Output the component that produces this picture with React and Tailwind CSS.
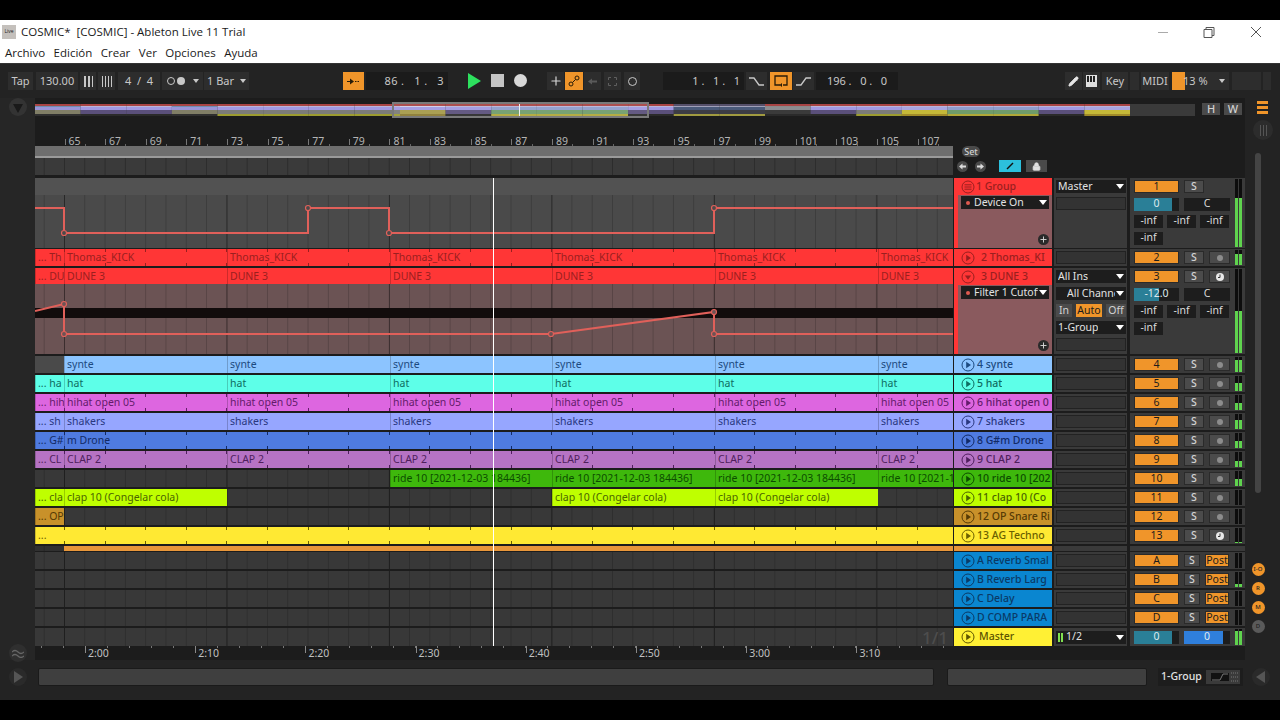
import React from "react";
import { Lock, Pencil, Plus } from "lucide-react";

const BAR = 20.31;
const barX = (b) => 29.5 + (b - 65) * BAR;
const STARTS = [64, 227, 390, 552, 715, 878];

const tracks = [
  { n: "4 synte", c: "#8cc4ff", t: "#1c4a80", label: "synte", lead: null, level: 0.8 },
  { n: "5 hat", c: "#5dffe8", t: "#0e6d62", label: "hat", lead: "... ha", level: 0.55 },
  { n: "6 hihat open 0", c: "#dd66e0", t: "#641c6b", label: "hihat open 05", lead: "... hih", ticks: true, level: 0.5 },
  { n: "7 shakers", c: "#96a6ff", t: "#29377f", label: "shakers", lead: "... sh", level: 0.6 },
  { n: "8 G#m Drone", c: "#4f7be0", t: "#122a66", lead: "... G#", ticks: true, level: 0.45 },
  { n: "9 CLAP 2", c: "#b673c4", t: "#4f1f5d", label: "CLAP 2", lead: "... CL", ticks: true, level: 0.4 },
  { n: "10 ride 10 [202", c: "#3eb80c", t: "#0c4d00", ride: true, level: 0.45 },
  { n: "11 clap 10 (Co", c: "#bfff00", t: "#4a6400", clap: true, level: 0 },
  { n: "12 OP Snare Ri", c: "#c8912a", t: "#553a05", lead: "... OP", short: true, level: 0 },
  { n: "13 AG Techno", c: "#ffe933", t: "#6b5f00", full: true, ticks: true, level: 0.1, clock: true },
];

const returns = [
  { l: "A", n: "A Reverb Smal", level: 0 },
  { l: "B", n: "B Reverb Larg", level: 0.2 },
  { l: "C", n: "C Delay", level: 0 },
  { l: "D", n: "D COMP PARA", level: 0 },
];

// red, pale, lavender, lower band, bottom band
const overviewColors = {
  A: ["#a84444", "#6d8fb0", "#9a94d8", "#807e66", "#2f2f2f"],
  B: ["#a84444", "#b9b5d8", "#a198e2", "#5a4f7a", "#2a2a2a"],
  C: ["#a84444", "#b9b5d8", "#a198e2", "#7c7c78", "#9c9c30"],
  D: ["#a84444", "#d0cde8", "#a198e2", "#a59a48", "#8a7a30"],
  G: ["#a84444", "#b9b5d8", "#8f9ccc", "#6f9c6a", "#b0a838"],
  E: ["#55506a", "#a0a0b8", "#4a5a7a", "#3c3c44", "#a09a40"],
  K: ["#a84444", "#8a8a8a", "#8c8c90", "#3a3a3a", "#2a2a2a"],
  Y: ["#a84444", "#b9b5d8", "#a9a4e0", "#c4b838", "#a08a28"],
};
const overviewPattern = "ABBACCCCDBGGGBEEKBCYGGBY".split("");

function Clip({ left, right, c, t, label }) {
  return (
    <div
      className="absolute top-0 bottom-0 overflow-hidden whitespace-nowrap border-l border-black/20 pl-[2px] text-[10.5px] leading-[17px]"
      style={{ left: left - 35, width: right - left, background: c, color: t }}
    >
      {label}
    </div>
  );
}

function Ticks({ c }) {
  const xs = [];
  for (let x = 29; x < 918; x += 40.6) xs.push(x);
  return xs.map((x) => (
    <React.Fragment key={x}>
      <i className="absolute top-0 h-[3px] w-px" style={{ left: x, background: c }} />
      <i className="absolute bottom-0 h-[3px] w-px" style={{ left: x, background: c }} />
    </React.Fragment>
  ));
}

function Lane({ children, className = "" }) {
  return (
    <div
      className={`relative w-[918px] shrink-0 overflow-hidden bg-[linear-gradient(to_right,#0000002e_1px,transparent_1px),linear-gradient(to_right,#00000055_1px,transparent_1px)] bg-[length:20.31px_100%,162.5px_100%] bg-[position:8.7px_0,29px_0] ${className}`}
    >
      {children}
    </div>
  );
}

function TrackIcon({ color, kind = "play" }) {
  return (
    <svg width="14" height="14" viewBox="0 0 14 14" className="shrink-0" fill="none">
      <circle cx="7" cy="7" r="6" stroke={color} strokeWidth="1" />
      {kind === "play" && <path d="M5.2 3.8 10 7 5.2 10.2Z" fill={color} />}
      {kind === "down" && <path d="M3.8 5.4h6.400L7 9.800Z" fill={color} />}
      {kind === "group" && <path d="M3.500 4.800h7M3.500 7h7M3.500 9.200h7" stroke={color} />}
    </svg>
  );
}

function Title({ name, c, t, kind, textMl = "ml-[2px]" }) {
  return (
    <div className="flex h-[17px] items-center" style={{ background: c, color: t }}>
      <span className="ml-[7px]">
        <TrackIcon color={t} kind={kind} />
      </span>
      <span className={`overflow-hidden whitespace-nowrap text-[10.5px] font-medium ${textMl}`}>{name}</span>
    </div>
  );
}

function Dropdown({ label, w = "w-[70px]", dot, pad = "pl-[2px]" }) {
  return (
    <div className={`flex h-[13px] items-center justify-between bg-[#1d1d1d] pr-[2px] text-[10.5px] text-[#e2e2e2] ${w} ${pad}`}>
      <span className="overflow-hidden whitespace-nowrap">
        {dot && <i className="mr-[4px] ml-[3px] inline-block h-[4px] w-[4px] rounded-full bg-[#e05a50] align-middle" />}
        {label}
      </span>
      <i className="ml-[1px] h-0 w-0 shrink-0 border-x-[4px] border-t-[5px] border-x-transparent border-t-white" />
    </div>
  );
}

function EmptyInput() {
  return <div className="h-[13px] w-[70px] border border-[#222] bg-[#333]" />;
}

function Cell({ children, className = "" }) {
  return <div className={`flex h-[13px] items-center justify-center text-[10.5px] ${className}`}>{children}</div>;
}

function Inf({ w = "w-[29px]" }) {
  return <Cell className={`${w} bg-[#1d1d1d] text-[#dcdcdc]`}>-inf</Cell>;
}

function Meter({ level }) {
  return (
    <div className="flex gap-px self-stretch py-[1px]">
      {[0, 1].map((i) => (
        <div key={i} className="relative w-[3px] bg-[#0d0d0d]">
          <div className="absolute inset-x-0 bottom-0 bg-[#5fd34e]" style={{ height: `${level * 100}%` }} />
        </div>
      ))}
    </div>
  );
}

function Arm({ clock }) {
  return (
    <Cell className="ml-[5px] w-[21px] border border-[#2a2a2a] bg-[#4b4b4b]">
      {clock ? (
        <svg width="8" height="8" viewBox="0 0 8 8">
          <circle cx="4" cy="4" r="4" fill="#e8e8e8" />
          <path d="M4 1.500V4.500H2" stroke="#333" fill="none" />
        </svg>
      ) : (
        <i className="block h-[6px] w-[6px] rounded-full bg-[#8c8c8c]" />
      )}
    </Cell>
  );
}

function Solo() {
  return <Cell className="ml-[5px] w-[20px] border border-[#2a2a2a] bg-[#4b4b4b] font-medium text-[#d2d2d2]">S</Cell>;
}

function Num({ children }) {
  return <Cell className="w-[45px] border border-[#2a2a2a] bg-[#f0952a] text-[#1c1c1c]">{children}</Cell>;
}

function Mixer({ children, level }) {
  return (
    <div className="ml-[3px] flex w-[115px] shrink-0 bg-[#3a3a3a] pl-[4px] pr-[2px]">
      <div className="flex w-[101px] shrink-0 flex-col">{children}</div>
      <Meter level={level} />
    </div>
  );
}

function MixLine({ children, className = "h-[17px]" }) {
  return <div className={`flex items-center ${className}`}>{children}</div>;
}

function Pan({ v, pct, fill = "#2a7f97", w = "w-[45px]", color = "text-[#dfe9ee]" }) {
  return (
    <div className={`relative flex h-[13px] items-center justify-center bg-[#1d1d1d] text-[10.5px] ${w} ${color}`}>
      <div className="absolute inset-y-0 left-0" style={{ width: pct, background: fill }} />
      <span className="relative">{v}</span>
    </div>
  );
}

function SmallRow({ t, i }) {
  return (
    <div className="flex h-[19px] pb-[2px]">
      <Lane className="bg-[#383838]">
        {t.full && <Clip left={35} right={953} c={t.c} t={t.t} label="..." />}
        {t.short && <Clip left={35} right={64} c={t.c} t={t.t} label={t.lead} />}
        {t.lead && !t.short && (
          <>
            <Clip left={35} right={64} c={t.c} t={t.t} label={t.lead} />
            {t.label ? (
              STARTS.map((s, k) => <Clip key={s} left={s} right={k < 5 ? STARTS[k + 1] : 953} c={t.c} t={t.t} label={t.label} />)
            ) : (
              <Clip left={64} right={953} c={t.c} t={t.t} label="m Drone" />
            )}
          </>
        )}
        {!t.lead && t.label && (
          <>
            <div className="absolute inset-y-0 left-0 w-[29px] bg-[#4a4a4a]" />
            {STARTS.map((s, k) => <Clip key={s} left={s} right={k < 5 ? STARTS[k + 1] : 953} c={t.c} t={t.t} label={t.label} />)}
          </>
        )}
        {t.ride &&
          [390, 552, 715, 878].map((s, k) => (
            <Clip key={s} left={s} right={k < 3 ? [552, 715, 878][k] : 953} c={t.c} t={t.t} label="ride 10 [2021-12-03 184436]" />
          ))}
        {t.clap && (
          <>
            <Clip left={35} right={64} c={t.c} t={t.t} label="... cla" />
            <Clip left={64} right={227} c={t.c} t={t.t} label="clap 10 (Congelar cola)" />
            <Clip left={552} right={715} c={t.c} t={t.t} label="clap 10 (Congelar cola)" />
            <Clip left={715} right={878} c={t.c} t={t.t} label="clap 10 (Congelar cola)" />
          </>
        )}
        {t.ticks && <Ticks c={t.t} />}
      </Lane>
      <div className="ml-px w-[98px] shrink-0">
        <Title name={t.n} c={t.c} t={t.t} />
      </div>
      <div className="ml-[2px] flex w-[73px] shrink-0 items-center bg-[#3a3a3a] pl-[2px]">
        <EmptyInput />
      </div>
      <Mixer level={t.level}>
        <MixLine>
          <Num>{i + 4}</Num>
          <Solo />
          <Arm clock={t.clock} />
        </MixLine>
      </Mixer>
    </div>
  );
}

function ReturnRow({ r }) {
  return (
    <div className="flex h-[19px] pb-[2px]">
      <Lane className="bg-[#383838]" />
      <div className="ml-px w-[98px] shrink-0">
        <Title name={r.n} c="#0a86d0" t="#0b3a66" />
      </div>
      <div className="ml-[2px] flex w-[73px] shrink-0 items-center bg-[#3a3a3a] pl-[2px]">
        <EmptyInput />
      </div>
      <Mixer level={r.level}>
        <MixLine>
          <Num>{r.l}</Num>
          <Cell className="ml-[5px] w-[16px] border border-[#2a2a2a] bg-[#4b4b4b] font-medium text-[#d2d2d2]">S</Cell>
          <Cell className="ml-[5px] w-[24px] border border-[#2a2a2a] bg-[#f0952a] text-[#1c1c1c]">Post</Cell>
        </MixLine>
      </Mixer>
    </div>
  );
}

function AddButton() {
  return (
    <div className="absolute right-[3px] bottom-[3px] flex h-[11px] w-[11px] items-center justify-center rounded-full bg-[#2a2a2a]">
      <Plus size={9} color="#d8d8d8" strokeWidth={2.5} />
    </div>
  );
}

function GroupRow() {
  return (
    <div className="flex h-[71px] pb-px">
      <Lane className="bg-[#4a4a4a]">
        <div className="h-[17px] bg-[#525252]" />
        <svg className="absolute inset-0" width="918" height="70" fill="none" stroke="#e0605a" strokeWidth="2">
          <path d="M0 30H29V55H273V30H354V55H679V30H918" />
          <g fill="#4a4a4a" strokeWidth="1.2">
            <circle cx="29" cy="55" r="2.500" />
            <circle cx="273" cy="30" r="2.500" />
            <circle cx="354" cy="55" r="2.500" />
            <circle cx="679" cy="30" r="2.500" />
          </g>
        </svg>
      </Lane>
      <div className="relative ml-px flex w-[98px] shrink-0 flex-col bg-[#ff3636]">
        <Title name="1 Group" c="#ff3636" t="#9a1f1f" kind="group" textMl="ml-[1px]" />
        <div className="relative ml-[4px] flex-1 bg-[#8a5a5e] pl-[3px] pt-px">
          <Dropdown label="Device On" w="w-[88px]" dot />
          <AddButton />
        </div>
      </div>
      <div className="ml-[2px] flex w-[73px] shrink-0 flex-col gap-[4px] bg-[#3a3a3a] pl-[2px] pt-[2px]">
        <Dropdown label="Master" />
        <EmptyInput />
      </div>
      <Mixer level={0.72}>
        <MixLine>
          <Num>1</Num>
          <Solo />
        </MixLine>
        <MixLine className="h-[18px]">
          <Pan v="0" pct="85%" />
          <Cell className="ml-[5px] w-[46px] bg-[#1d1d1d] text-[#dcdcdc]">C</Cell>
        </MixLine>
        <MixLine className="-mt-px h-[18px] gap-[4px]">
          <Inf />
          <Inf />
          <Inf />
        </MixLine>
        <MixLine className="-mt-px h-[18px]">
          <Inf />
        </MixLine>
      </Mixer>
    </div>
  );
}

function ThomasRow() {
  return (
    <div className="flex h-[19px] pb-[2px]">
      <Lane className="bg-[#ff3636]">
        <Clip left={35} right={64} c="#ff3636" t="#9a1f1f" label="... Th" />
        {STARTS.map((s, k) => (
          <Clip key={s} left={s} right={k < 5 ? STARTS[k + 1] : 953} c="#ff3636" t="#9a1f1f" label="Thomas_KICK" />
        ))}
        <Ticks c="#9a1f1f" />
      </Lane>
      <div className="ml-px w-[98px] shrink-0">
        <Title name="2 Thomas_KI" c="#ff3636" t="#9a1f1f" textMl="ml-[6px]" />
      </div>
      <div className="ml-[2px] flex w-[73px] shrink-0 items-center bg-[#3a3a3a] pl-[2px]">
        <EmptyInput />
      </div>
      <Mixer level={0.75}>
        <MixLine>
          <Num>2</Num>
          <Solo />
          <Arm />
        </MixLine>
      </Mixer>
    </div>
  );
}

function DuneRow() {
  return (
    <div className="flex h-[88px] pb-[2px]">
      <Lane className="bg-[#6b5354]">
        <div className="absolute inset-x-0 top-0 h-[16px]">
          <Clip left={35} right={64} c="#ff3636" t="#9a1f1f" label="... DU" />
          {STARTS.map((s, k) => (
            <Clip key={s} left={s} right={k < 5 ? STARTS[k + 1] : 953} c="#ff3636" t="#9a1f1f" label="DUNE 3" />
          ))}
        </div>
        <div className="absolute inset-x-0 top-[40px] h-[10px] bg-[#120c0c]" />
        <svg className="absolute inset-0" width="918" height="86" fill="none" stroke="#e0605a" strokeWidth="2">
          <path d="M0 43 29 36V66H516L679 44V66H918" />
          <g fill="#6b5354" strokeWidth="1.2">
            <circle cx="29" cy="36" r="2.500" />
            <circle cx="29" cy="66" r="2.500" />
            <circle cx="516" cy="66" r="2.500" />
            <circle cx="679" cy="44" r="2.500" />
            <circle cx="679" cy="66" r="2.500" />
          </g>
        </svg>
      </Lane>
      <div className="relative ml-px flex w-[98px] shrink-0 flex-col bg-[#ff3636]">
        <Title name="3 DUNE 3" c="#ff3636" t="#9a1f1f" kind="down" textMl="ml-[6px]" />
        <div className="relative ml-[4px] flex-1 bg-[#8a5a5e] pl-[3px] pt-px">
          <Dropdown label="Filter 1 Cutoff" w="w-[88px]" dot />
          <AddButton />
        </div>
      </div>
      <div className="ml-[2px] flex w-[73px] shrink-0 flex-col gap-[4px] bg-[#3a3a3a] pl-[2px] pt-[2px]">
        <Dropdown label="All Ins" />
        <Dropdown label="All Channels" pad="pl-[11px]" />
        <div className="flex h-[13px] w-[70px] gap-[4px]">
          <Cell className="w-[16px] bg-[#4b4b4b] text-[#d2d2d2]">In</Cell>
          <Cell className="w-[26px] bg-[#f0952a] text-[#1c1c1c]">Auto</Cell>
          <Cell className="w-[20px] bg-[#4b4b4b] text-[#d2d2d2]">Off</Cell>
        </div>
        <Dropdown label="1-Group" />
        <EmptyInput />
      </div>
      <Mixer level={0.5}>
        <MixLine>
          <Num>3</Num>
          <Solo />
          <Arm clock />
        </MixLine>
        <MixLine className="h-[18px]">
          <Pan v="-12.0" pct="55%" />
          <Cell className="ml-[5px] w-[46px] bg-[#1d1d1d] text-[#dcdcdc]">C</Cell>
        </MixLine>
        <MixLine className="-mt-px h-[18px] gap-[4px]">
          <Inf />
          <Inf />
          <Inf />
        </MixLine>
        <MixLine className="-mt-px h-[18px]">
          <Inf />
        </MixLine>
      </Mixer>
    </div>
  );
}

function TBox({ className = "", children }) {
  return <div className={`flex h-[18px] shrink-0 items-center justify-center text-[11px] text-[#c8c8c8] ${className}`}>{children}</div>;
}

function Bars({ n = 3, thick, color = "bg-[#c8c8c8]" }) {
  return (
    <span className="flex gap-[2px]">
      {Array.from({ length: n }).map((_, i) => (
        <i key={i} className={`block h-[11px] ${color} ${thick && i < 2 ? "w-[2px]" : "w-px"}`} />
      ))}
    </span>
  );
}

function Transport() {
  return (
    <div className="flex h-[34px] items-start pt-[8px]">
      <TBox className="ml-[8px] w-[25px] bg-[#2d2d2d]">Tap</TBox>
      <TBox className="ml-[3px] w-[42px] bg-[#2d2d2d]">130.00</TBox>
      <TBox className="ml-[2px] w-[16px] bg-[#2d2d2d]"><Bars thick /></TBox>
      <TBox className="ml-[2px] w-[17px] bg-[#2d2d2d]"><Bars n={4} /></TBox>
      <TBox className="ml-[3px] w-[42px] whitespace-pre bg-[#2d2d2d]">4  /  4</TBox>
      <TBox className="ml-[2px] w-[41px] gap-[2px] bg-[#2d2d2d]">
        <i className="h-[8px] w-[8px] rounded-full border border-[#c8c8c8]" />
        <i className="h-[8px] w-[8px] rounded-full bg-[#c8c8c8]" />
        <i className="ml-[6px] h-0 w-0 border-x-[3px] border-t-[4px] border-x-transparent border-t-[#c8c8c8]" />
      </TBox>
      <TBox className="ml-px w-[45px] gap-[6px] bg-[#2d2d2d]">
        1 Bar
        <i className="h-0 w-0 border-x-[3px] border-t-[4px] border-x-transparent border-t-[#c8c8c8]" />
      </TBox>
      <TBox className="ml-[94px] w-[21px] bg-[#f0952a]">
        <svg width="13" height="7" viewBox="0 0 13 7" fill="#2a1c08">
          <path d="M0 3h3v1H0zM3 .5 7 3.500 3 6.500zM8 3h1.500v1H8zM10.500 3H12v1h-1.500z" />
        </svg>
      </TBox>
      <TBox className="ml-[2px] w-[82px] justify-end whitespace-pre bg-[#1b1b1b] pr-[4px] tracking-[0.4px]">86 .   1 .   3</TBox>
      <div className="ml-[20px] mt-[1px] h-0 w-0 border-y-[8px] border-l-[13px] border-y-transparent border-l-[#2de05e]" />
      <div className="ml-[10px] mt-[2px] h-[13px] w-[13px] bg-[#c4c4c4]" />
      <div className="ml-[10px] mt-[2px] h-[13px] w-[13px] rounded-full bg-[#d8d8d8]" />
      <TBox className="ml-[20px] w-[17px] bg-[#2d2d2d]"><Plus size={14} color="#d8d8d8" /></TBox>
      <TBox className="ml-px w-[18px] bg-[#f0952a]">
        <svg width="12" height="12" viewBox="0 0 12 12" fill="none" stroke="#2a1c08">
          <circle cx="3" cy="9" r="2" />
          <circle cx="9" cy="3" r="2" />
          <path d="M4.500 7.500 7.500 4.500" />
        </svg>
      </TBox>
      <TBox className="ml-px w-[17px] bg-[#2d2d2d]">
        <svg width="9" height="7" viewBox="0 0 9 7" fill="#5a5a5a"><path d="M0 3.500 4 .5v2h5v2H4v2z" /></svg>
      </TBox>
      <TBox className="ml-[3px] w-[17px] bg-[#2d2d2d]">
        <svg width="9" height="9" viewBox="0 0 9 9" fill="none" stroke="#5f5f5f"><path d="M.5 3V.5H3M6 .5h2.500V3M8.500 6v2.500H6M3 8.500H.5V6" /></svg>
      </TBox>
      <TBox className="ml-[3px] w-[16px] bg-[#2d2d2d]"><i className="h-[9px] w-[9px] rounded-full border border-[#c8c8c8]" /></TBox>
      <TBox className="ml-[23px] w-[81px] justify-end whitespace-pre bg-[#1b1b1b] pr-[4px]">1 .   1 .   1</TBox>
      <TBox className="ml-[2px] w-[21px] bg-[#2d2d2d]">
        <svg width="15" height="9" viewBox="0 0 15 9" fill="none" stroke="#c8c8c8" strokeWidth="1.300"><path d="M0 1h5l5 7h5" /></svg>
      </TBox>
      <TBox className="ml-[3px] w-[22px] bg-[#f0952a]">
        <svg width="14" height="12" viewBox="0 0 14 12" fill="none" stroke="#2a1c08" strokeWidth="1.300">
          <path d="M6 10H1V1h12v9H9" />
          <path d="M8 8v4L5.500 10z" fill="#2a1c08" stroke="none" />
        </svg>
      </TBox>
      <TBox className="ml-px w-[21px] bg-[#2d2d2d]">
        <svg width="15" height="9" viewBox="0 0 15 9" fill="none" stroke="#c8c8c8" strokeWidth="1.300"><path d="M0 8h5l5-7h5" /></svg>
      </TBox>
      <TBox className="ml-[2px] w-[82px] whitespace-pre bg-[#1b1b1b]">196 .   0 .   0</TBox>
      <TBox className="ml-[167px] w-[17px] bg-[#2d2d2d]"><Pencil size={11} color="#e8e8e8" fill="#e8e8e8" /></TBox>
      <TBox className="ml-px w-[17px] bg-[#2d2d2d]">
        <span className="flex h-[12px] w-[11px] gap-px bg-[#e0e0e0] p-px">
          <i className="h-[6px] w-[2px] bg-[#222]" />
          <i className="h-[6px] w-[2px] bg-[#222]" />
          <i className="h-[6px] w-[2px] bg-[#222]" />
        </span>
      </TBox>
      <TBox className="ml-[2px] w-[26px] bg-[#2d2d2d]">Key</TBox>
      <TBox className="ml-[2px] w-[9px] bg-[#2d2d2d]" />
      <TBox className="ml-[2px] w-[28px] bg-[#2d2d2d]">MIDI</TBox>
      <TBox className="relative ml-[3px] w-[57px] justify-start bg-[#2d2d2d]">
        <i className="absolute inset-y-0 left-0 w-[13px] bg-[#f0952a]" />
        <span className="relative ml-[11px]">13 %</span>
        <i className="absolute right-[4px] h-0 w-0 border-x-[3px] border-t-[4px] border-x-transparent border-t-[#c8c8c8]" />
      </TBox>
      <TBox className="ml-[3px] w-[29px] bg-[#2d2d2d]" />
      <TBox className="ml-[2px] w-[8px] bg-[#2d2d2d]" />
    </div>
  );
}

function OverviewStrip() {
  const W = 1095 / 24;
  return (
    <svg width="1160" height="16" className="block">
      <rect y="2" width="1160" height="12" fill="#3a3a3a" />
      {overviewPattern.map((k, i) => {
        const x = i * W;
        const [red, pale, lav, low, bot] = overviewColors[k];
        return (
          <g key={i}>
            <rect x={x} y="2" width={W} height="2" fill={red} />
            <rect x={x} y="4" width={W} height="1" fill={pale} />
            <rect x={x} y="5" width={W} height="3" fill={lav} />
            <rect x={x} y="8" width={W} height="4" fill={low} />
            <rect x={x} y="12" width={W} height="2" fill={bot} />
          </g>
        );
      })}
      <rect x="358" y="1" width="255" height="14" fill="#ffffff10" stroke="#7a7a7a" strokeWidth="2" />
      <rect x="484" y="2" width="1" height="12" fill="#eee" />
    </svg>
  );
}

function Overview() {
  return (
    <div className="flex h-[20px]">
      <div className="flex w-[35px] justify-center bg-[#262626]">
        <div className="flex h-[18px] w-[18px] items-center justify-center rounded-full bg-[#333]">
          <i className="mt-[2px] h-0 w-0 border-x-[5px] border-t-[9px] border-x-transparent border-t-[#191919]" />
        </div>
      </div>
      <div className="flex w-[1210px] bg-[#1c1c1c] pt-[4px]">
        <OverviewStrip />
        <div className="ml-[7px] mt-px flex h-[12px] w-[40px] justify-between text-[11px] font-medium text-[#d0d0d0]">
          <span className="flex w-[18px] items-center justify-center bg-[#4a4a4a]">H</span>
          <span className="flex w-[18px] items-center justify-center bg-[#4a4a4a]">W</span>
        </div>
      </div>
      <div className="ml-[12px] mt-[3px] flex h-[13px] w-[11px] flex-col justify-between">
        <i className="h-[3px] bg-[#f0952a]" />
        <i className="h-[3px] bg-[#f0952a]" />
        <i className="h-[3px] bg-[#f0952a]" />
      </div>
    </div>
  );
}

function Ruler() {
  const labels = [];
  for (let b = 65; b <= 107; b += 2) labels.push(b);
  return (
    <div className="relative h-[16px] w-[918px]">
      {labels.map((b) => (
        <React.Fragment key={b}>
          <i className="absolute top-[9px] h-[6px] w-px bg-[#777]" style={{ left: barX(b) }} />
          <i className="absolute top-[14px] h-[2px] w-px bg-[#666]" style={{ left: barX(b) + BAR }} />
          <span className="absolute top-[5px] pl-[4px] text-[10.5px] leading-[12px] text-[#b4b4b4]" style={{ left: barX(b) }}>
            {b}
          </span>
        </React.Fragment>
      ))}
    </div>
  );
}

function TimeRuler() {
  const labels = ["2:00", "2:10", "2:20", "2:30", "2:40", "2:50", "3:00", "3:10"];
  const ticks = [];
  for (let x = 6; x < 918; x += 22) ticks.push(x);
  return (
    <div className="relative h-[14px] w-[918px]">
      {ticks.map((x) => (
        <i key={x} className="absolute top-0 h-[2px] w-px bg-[#777]" style={{ left: x }} />
      ))}
      {labels.map((l, i) => (
        <React.Fragment key={l}>
          <i className="absolute top-0 h-[7px] w-px bg-[#888]" style={{ left: 50 + i * 110.2 }} />
          <span className="absolute top-0 pl-[3px] text-[10.5px] leading-[14px] text-[#c0c0c0]" style={{ left: 50 + i * 110.2 }}>
            {l}
          </span>
        </React.Fragment>
      ))}
    </div>
  );
}

function RoundArrow({ d, className = "" }) {
  return (
    <svg width="11" height="11" viewBox="0 0 11 11" className={className}>
      <circle cx="5.500" cy="5.500" r="5.500" fill="#4a4a4a" />
      <path d={d} fill="#dcdcdc" />
    </svg>
  );
}

function Arrangement() {
  return (
    <div className="relative w-[1210px] shrink-0">
      <div className="flex h-[58px] pt-[12px]">
        <div className="w-[918px] shrink-0">
          <Ruler />
          <div className="h-[12px] border-b-2 border-[#9a9a9a] bg-[#6e6e6e]" />
          <div className="h-[17px] bg-[#3a3a3a] bg-[linear-gradient(to_right,#2c2c2c_1px,transparent_1px)] bg-[length:20.31px_100%] bg-[position:8.7px_0]" />
        </div>
        <div className="relative ml-[9px] pt-[16px]">
          <div className="flex h-[11px] w-[18px] items-center justify-center rounded-full bg-[#4a4a4a] text-[9px] font-medium text-[#d0d0d0]">Set</div>
          <div className="mt-[3px] flex h-[12px] items-center">
            <RoundArrow className="-ml-[5px]" d="M2 5.500 5.500 2.500v2H9v2H5.500v2z" />
            <RoundArrow className="ml-[7px]" d="M9 5.500 5.500 2.500v2H2v2h3.500v2z" />
            <span className="ml-[13px] flex h-[12px] w-[22px] items-center justify-center bg-[#2cc0dd]">
              <svg width="8" height="8" viewBox="0 0 8 8" stroke="#111" strokeWidth="1.500"><path d="M1 7 7 1" /></svg>
            </span>
            <span className="ml-[5px] flex h-[12px] w-[21px] items-center justify-center bg-[#4a4a4a]">
              <Lock size={9} color="#e0e0e0" fill="#e0e0e0" />
            </span>
          </div>
        </div>
      </div>
      <div className="mt-[2px]">
        <GroupRow />
        <ThomasRow />
        <DuneRow />
        {tracks.map((t, i) => (
          <SmallRow key={t.n} t={t} i={i} />
        ))}
        <div className="flex h-[6px] pb-px">
          <Lane className="bg-[#303030]">
            <div className="absolute inset-y-0 left-[29px] right-0 bg-[#e8963a]" />
          </Lane>
          <div className="ml-px w-[98px] shrink-0 bg-[#e8963a]" />
          <div className="ml-[2px] w-[73px] shrink-0 bg-[#3a3a3a]" />
          <div className="ml-[3px] w-[115px] shrink-0 bg-[#3a3a3a]" />
        </div>
        {returns.map((r) => (
          <ReturnRow key={r.l} r={r} />
        ))}
        <div className="flex h-[18px]">
          <Lane className="bg-[#383838]">
            <span className="absolute right-[5px] top-[-3px] text-[17px] font-medium text-[#4d4d4d]">1/1</span>
          </Lane>
          <div className="ml-px w-[98px] shrink-0">
            <div className="flex h-[18px] items-center bg-[#fff034] text-[#5c5300]">
              <span className="ml-[7px]"><TrackIcon color="#5c5300" /></span>
              <span className="ml-[4px] text-[10.5px] font-medium">Master</span>
            </div>
          </div>
          <div className="ml-[2px] flex w-[73px] shrink-0 items-center bg-[#3a3a3a] pl-[2px]">
            <div className="flex h-[13px] w-[70px] items-center bg-[#1d1d1d] pl-[2px] text-[10.5px] text-[#e2e2e2]">
              <i className="h-[9px] w-[2px] bg-[#80e050]" />
              <i className="ml-px h-[9px] w-[2px] bg-[#80e050]" />
              <span className="ml-[3px]">1/2</span>
              <i className="ml-auto mr-[2px] h-0 w-0 border-x-[4px] border-t-[5px] border-x-transparent border-t-white" />
            </div>
          </div>
          <Mixer level={0.9}>
            <MixLine className="h-[18px]">
              <Pan v="0" pct="85%" />
              <Pan v="0" pct="85%" fill="#2f7fdc" w="ml-[5px] w-[46px]" />
            </MixLine>
          </Mixer>
        </div>
        <TimeRuler />
      </div>
      {/* playhead */}
      <div className="absolute left-[458px] top-[60px] bottom-[14px] w-px bg-white" />
    </div>
  );
}

function RightGutter() {
  const buttons = [
    { l: "I-O", c: "bg-[#f0952a]" },
    { l: "R", c: "bg-[#f0952a]" },
    { l: "M", c: "bg-[#f0952a]" },
    { l: "D", c: "bg-[#5a5a5a]" },
  ];
  return (
    <div className="flex w-[35px] flex-col items-center">
      <div className="mt-[2px] ml-[1px] flex h-[20px] w-[20px] items-center justify-center rounded-full bg-[#2c2c2c]">
        <Bars color="bg-[#555]" />
      </div>
      <div className="ml-[-9px] mt-[13px] h-[340px] w-[6px] rounded-full bg-[#444]" />
      <div className="ml-[-9px] mt-[70px] flex flex-col gap-[6px]">
        {buttons.map((b) => (
          <span key={b.l} className={`flex h-[13px] w-[13px] items-center justify-center rounded-full text-[6px] font-medium text-[#222] ${b.c}`}>
            {b.l}
          </span>
        ))}
      </div>
    </div>
  );
}

function BottomBar() {
  return (
    <div className="flex h-[40px] items-start pt-[8px]">
      <div className="flex w-[35px] justify-center">
        <div className="flex h-[18px] w-[18px] items-center justify-center rounded-full bg-[#2a2a2a]">
          <i className="ml-[2px] h-0 w-0 border-y-[6px] border-l-[9px] border-y-transparent border-l-[#555]" />
        </div>
      </div>
      <div className="ml-[3px] h-[18px] w-[896px] rounded-[2px] border border-[#1a1a1a] bg-[#3f3f3f]" />
      <div className="ml-[13px] h-[18px] w-[200px] rounded-[2px] border border-[#1a1a1a] bg-[#3f3f3f]" />
      <div className="ml-[11px] flex h-[18px] w-[85px] items-center bg-[#1d1d1d] pl-[3px] text-[10.5px] font-medium text-[#e2e2e2]">
        1-Group
        <svg width="34" height="14" viewBox="0 0 34 14" className="ml-[4px]">
          <rect width="34" height="14" fill="#3a3a3a" />
          <rect x="5" y="3" width="18" height="8" fill="#111" />
          <path d="M6 10h8l3-6h5" stroke="#777" fill="none" />
          <path d="M25 3h7M25 7h7M25 11h7" stroke="#777" strokeDasharray="1 1" />
        </svg>
      </div>
      <div className="ml-[9px] flex h-[18px] w-[18px] items-center justify-center rounded-full bg-[#2a2a2a]">
        <i className="mr-[2px] h-0 w-0 border-y-[6px] border-r-[9px] border-y-transparent border-r-[#555]" />
      </div>
    </div>
  );
}

export default function App() {
  return (
    <div className="flex h-[720px] w-[1280px] flex-col overflow-hidden bg-black font-['Noto_Sans',sans-serif]">
      <div className="mt-[20px] h-[43px] shrink-0 bg-white font-['Open_Sans',sans-serif] text-[#1a1a1a]">
        <div className="flex h-[23px] items-center pt-px">
          <div className="ml-[2px] flex h-[14px] w-[14px] items-center justify-center bg-[#c4c0bc] text-[5px] text-[#222]">Live</div>
          <span className="ml-[5px] whitespace-pre text-[11.5px]">COSMIC*  [COSMIC] - Ableton Live 11 Trial</span>
          <svg className="ml-auto mr-[12px]" width="110" height="12" viewBox="0 0 110 12" fill="none" stroke="#555">
            <path d="M0 6.500H10" stroke="#aaa" />
            <path d="M46 3.500h8v8h-8zM48 3.500v-2h8v8h-2" />
            <path d="M93 1 103 11M103 1 93 11" />
          </svg>
        </div>
        <div className="flex h-[20px] items-center gap-[8.5px] pl-[5px] text-[11.5px]">
          <span>Archivo</span>
          <span>Edición</span>
          <span>Crear</span>
          <span>Ver</span>
          <span>Opciones</span>
          <span>Ayuda</span>
        </div>
      </div>
      <div className="h-[637px] shrink-0 border-t border-[#333] bg-[#232323]">
        <Transport />
        <Overview />
        <div className="flex h-[542px]">
          <div className="flex w-[35px] flex-col justify-end bg-[#262626]">
            <div className="mx-auto -mb-[2px] flex h-[18px] w-[18px] items-center justify-center rounded-full bg-[#2f2f2f]">
              <svg width="12" height="9" viewBox="0 0 12 9" fill="none" stroke="#666" strokeWidth="1.200">
                <path d="M0 3c2-2 4-2 6 0s4 2 6 0M0 7c2-2 4-2 6 0s4 2 6 0" />
              </svg>
            </div>
          </div>
          <div className="bg-[#1c1c1c]">
            <Arrangement />
          </div>
          <RightGutter />
        </div>
        <BottomBar />
      </div>
    </div>
  );
}
